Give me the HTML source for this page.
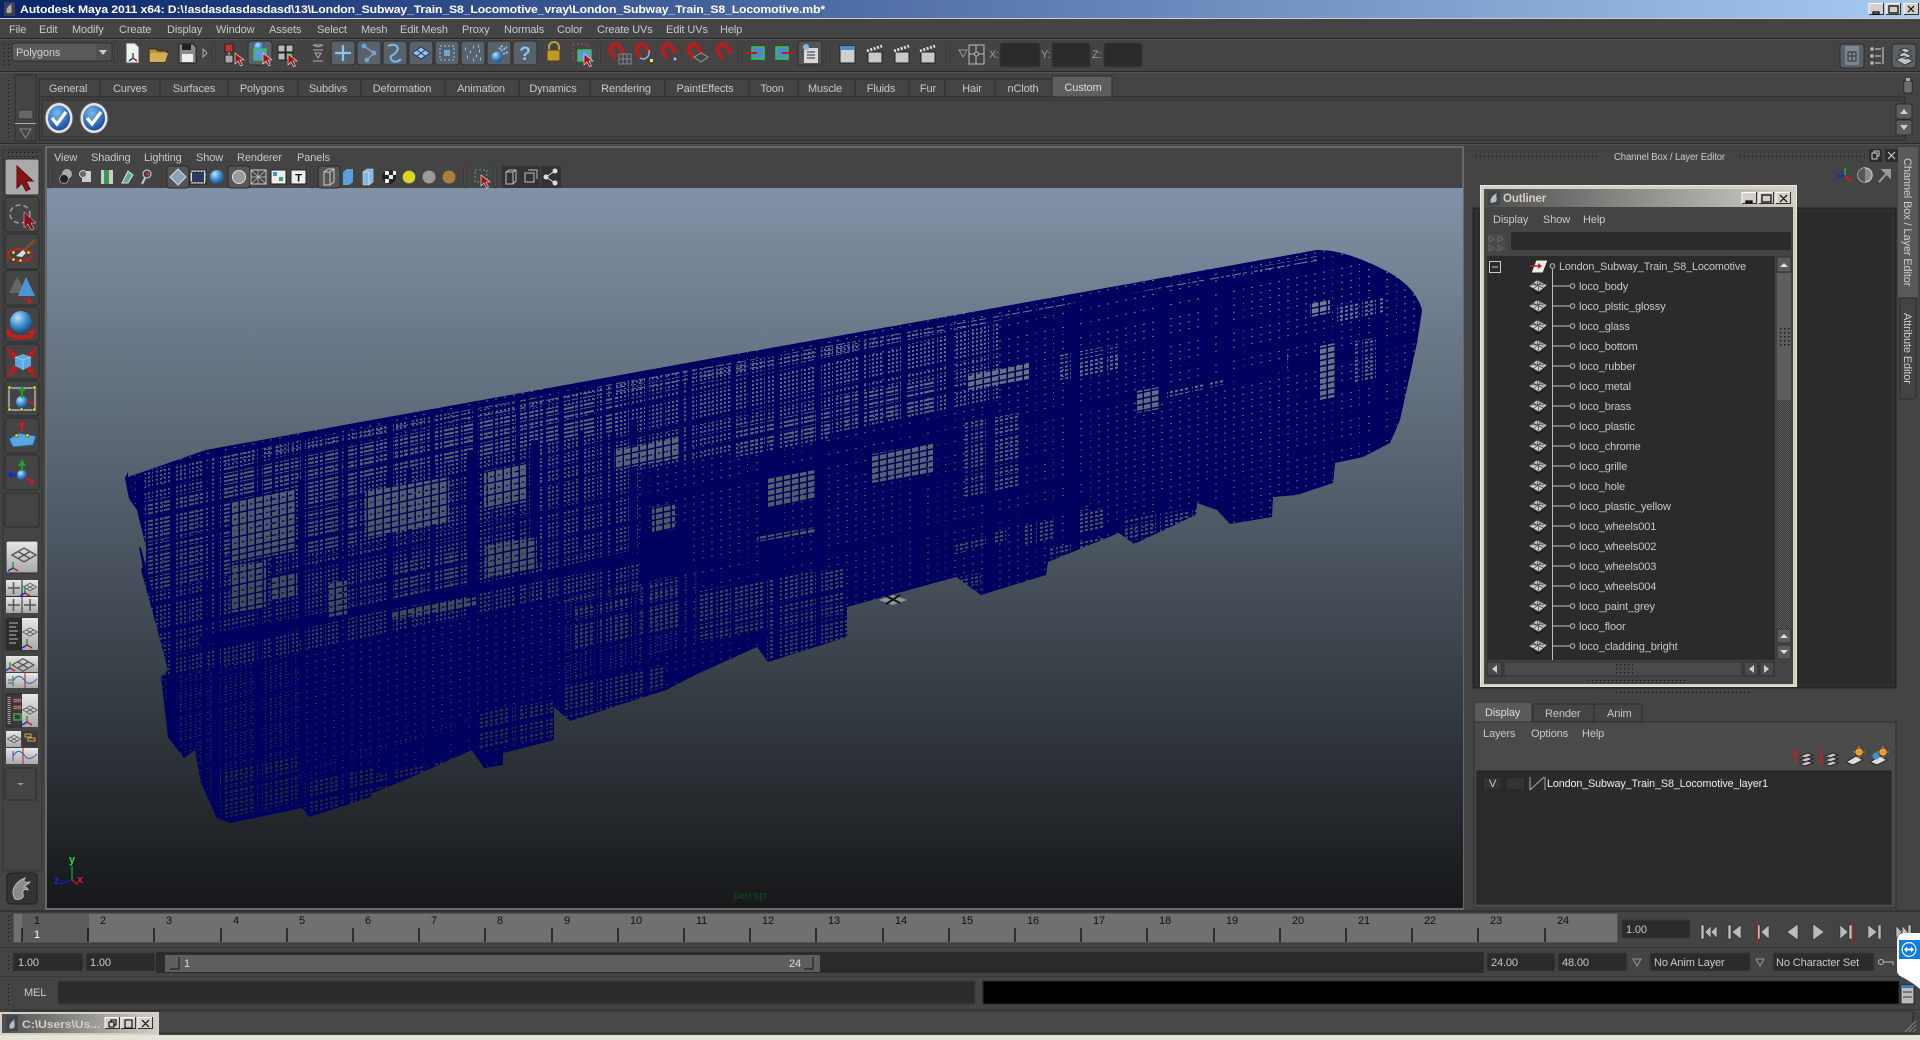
<!DOCTYPE html>
<html><head><meta charset="utf-8"><title>Autodesk Maya 2011</title>
<style>
html,body{margin:0;padding:0;background:#444;overflow:hidden}
svg{display:block}
text{font:11px "Liberation Sans",sans-serif;fill:#c8c8c8;white-space:pre;letter-spacing:-.12px}
.k text,text.k{fill:#111}
</style></head><body>
<svg width="1920" height="1040" viewBox="0 0 1920 1040" xmlns="http://www.w3.org/2000/svg">
<defs>
<linearGradient id="ttl"><stop offset="0" stop-color="#0a246a"/><stop offset="1" stop-color="#a6caf0"/></linearGradient>
<linearGradient id="vp" x1="0" y1="188" x2="0" y2="908" gradientUnits="userSpaceOnUse"><stop offset="0" stop-color="rgb(128,146,166)"/><stop offset="1" stop-color="rgb(22,24,26)"/></linearGradient>
<linearGradient id="ol"><stop offset="0" stop-color="#4d4d4d"/><stop offset="1" stop-color="#d0cec6"/></linearGradient>
<linearGradient id="wb" x1="0" y1="0" x2="0" y2="1"><stop offset="0" stop-color="#e8e8e8"/><stop offset="1" stop-color="#a8a8a8"/></linearGradient>
<radialGradient id="sph" cx=".35" cy=".3" r=".8"><stop offset="0" stop-color="#bfe0f8"/><stop offset=".5" stop-color="#3d8fd0"/><stop offset="1" stop-color="#123f70"/></radialGradient>
<radialGradient id="ck" cx=".4" cy=".3" r=".8"><stop offset="0" stop-color="#79b8f0"/><stop offset="1" stop-color="#0c3f96"/></radialGradient>
<pattern id="dots" width="4" height="4" patternUnits="userSpaceOnUse"><rect width="2" height="2" fill="#2a2a2a"/><rect x="1" y="1" width="1" height="1" fill="#666"/></pattern>
<pattern id="chk" width="2" height="2" patternUnits="userSpaceOnUse"><rect width="2" height="2" fill="#3a3a3a"/><rect width="1" height="1" fill="#5a5a5a"/><rect x="1" y="1" width="1" height="1" fill="#5a5a5a"/></pattern>
<pattern id="pA" width="8" height="6" patternUnits="userSpaceOnUse" patternTransform="skewY(-12)"><rect width="6.5" height="4.5" fill="#000"/></pattern>
<pattern id="pB" width="5" height="4" patternUnits="userSpaceOnUse" patternTransform="skewY(-12)"><rect width="3" height="2" fill="#000"/></pattern>
<pattern id="pC" width="4" height="4" patternUnits="userSpaceOnUse" patternTransform="skewY(-12)"><rect width="2" height="2" fill="#000"/></pattern>
<pattern id="pC2" width="5" height="3" patternUnits="userSpaceOnUse" patternTransform="skewY(-16)"><rect width="1.500" height="1" fill="#000"/></pattern>
<pattern id="pD" width="9" height="7" patternUnits="userSpaceOnUse" patternTransform="skewY(-12)"><rect width="2" height="1" fill="#000"/></pattern>
<pattern id="pH" width="11" height="4" patternUnits="userSpaceOnUse" patternTransform="skewY(-10)"><rect width="9" height="1" fill="#000"/></pattern>
<pattern id="pW" width="17" height="13" patternUnits="userSpaceOnUse" patternTransform="skewY(-12)"><rect width="2" height="13" fill="#fff"/><rect width="17" height="1" fill="#fff"/></pattern>
<pattern id="pW2" width="43" height="29" patternUnits="userSpaceOnUse" patternTransform="skewY(-13)"><rect width="4" height="29" fill="#fff"/><rect width="43" height="3" fill="#fff"/></pattern>
<clipPath id="sil"><path d="M128 477L206 450L720 357L1000 307L1317 250Q1345 249 1390 273Q1416 288 1422 310L1417 343L1400 420L1390 443L1363 457L1335 463L1333 483L1297 495L1273 497L1272 517L1230 524L1217 510L1197 503L1196 515L1134 544L1119 533L1048 562L1046 575L981 595L956 577L847 607L847 637L768 662L757 647L695 675L666 690L570 721L554 707L554 740L503 753L503 765L484 768L472 750L405 780L373 793L371 797L309 817L302 808L230 823L217 818L201 783L195 750L184 758L168 737L161 677L168 670L157 628L141 570L146 560L146 547L137 510L130 500L126 477Z"/></clipPath>
<mask id="train" maskUnits="userSpaceOnUse" x="0" y="0" width="1920" height="1040">
<g clip-path="url(#sil)">
<rect width="1920" height="1040" fill="#fff"/>
<rect x="120" y="240" width="1310" height="590" fill="url(#pD)"/>
<path fill="url(#pC)" d="M145 470L640 378V590L145 680Z"/>
<path fill="url(#pC)" d="M640 378L1000 320V400L640 470Z"/>
<path fill="url(#pC2)" d="M160 680L700 570V640L300 780 200 800Z"/>
<path fill="url(#pH)" d="M206 457L1000 314V324L206 467Z"/>
<path fill="url(#pH)" d="M1000 314L1317 256V262L1000 320Z"/>
<path fill="url(#pB)" d="M213 772l84-15v48l-84 15zM302 780l71-13v33l-71 13zM373 774l94-17v16l-94 17zM476 714l78-14v36l-78 14zM559 686l105-19v34l-105 19zM766 635l44-8v25l-44 8zM699 610l111-20v27l-111 20zM641 587l40-7v50l-40 7zM574 607l58-10v43l-58 10zM391 564l76-14v36l-76 14zM736 424l94-17v33l-94 17zM845 396l88-16v31l-88 16zM1060 355l65-12v25l-65 12zM1167 390l57-10v13l-57 10zM1333 306l50-9v17l-50 9zM1355 341l23-4v46l-23 4zM1287 354l8-1v43l-8 1zM1121 521l76-14v22l-76 14zM1048 548l71-13v14l-71 13zM768 628l79-14v27l-79 14zM956 577l25-5v20l-25-5zM150 500l80-14v90l-80 14zM300 470l60-11v85l-60 11zM215 470L620 395V430L215 505zM964 423l54-10v74l-54 10zM1075 510l30-10v30l-30 10zM700 590l145-23v50l-145 23zM956 544l50-14v10l-50 14zM1025 525l31-5v20l-31 5z"/>
<rect width="1920" height="1040" fill="url(#pW)"/>
<rect width="1920" height="1040" fill="url(#pW2)"/>
<path fill="#fff" d="M199 636L690 543v10L199 646zM640 533l50-9v40l-50 9zM298 480h6v160h-6zM467 450h10v190h-10zM531 440h7v120h-7zM578 430h6v120h-6zM631 420h6v130h-6zM208 455h4v180h-4zM300 650L560 600v90L300 770zM1090 420L1290 370v90L1090 510z"/>
<path fill="url(#pD)" d="M300 650L560 600v90L300 770zM1090 420L1290 370v90L1090 510z"/>
<path fill="url(#pA)" d="M231 502l65-12v61l-65 12zM365 492l84-15v45l-84 15zM484 471l42-8v39l-42 8zM485 546l52-9v31l-52 9zM614 449l65-12v21l-65 12zM652 507l23-4v26l-23 4zM767 479l48-9v28l-48 9zM872 454l61-11v29l-61 11zM968 374l61-11v16l-61 11zM1137 391l22-4v22l-22 4zM1310 304l20-4v13l-20 4zM1320 346l15-3v54l-15 3zM230 566l36-6v47l-36 6zM270 578l27-5v22l-27 5zM329 583l18-3v34l-18 3zM391 612l85-15v8l-85 15zM757 537l58-10v5l-58 10z"/>
</g>
</mask>

<g id="cur"><path d="M0 0v11l3-3 2.5 5 2-1-2.5-5h4z" fill="#a8101c" stroke="#eee" stroke-width=".6"/></g>
<g id="bb"><rect x="-12" y="-12" width="24" height="24" rx="3" fill="#59626a" stroke="#2c2c2c"/></g>
<g id="bg"><rect x="-12" y="-12" width="24" height="24" rx="3" fill="#555" stroke="#2c2c2c"/></g>
<g id="mag"><path d="M-5 7V-1a5 5 0 0 1 10 0V7" fill="none" stroke="#b81c1c" stroke-width="4" transform="rotate(-30)"/></g>
<g id="clap"><rect x="-8" y="-3" width="14" height="11" fill="#c8c8c8" stroke="#222"/><path d="M-9-4L6-9" stroke="#ddd" stroke-width="3" stroke-dasharray="2 1.5"/></g>
<g id="sep"><rect x="-1" y="-11" width="2" height="22" rx="1" fill="#555" stroke="#2a2a2a" stroke-width=".6"/></g>
<g id="pl"><path d="M-12 0L0-7 12 0 0 7Z M-6-3.5L6 3.5M6-3.5L-6 3.5" fill="none" stroke="#555" stroke-width="1.4"/></g>
<g id="xyz"><path d="M0 0V-6" stroke="#12a030" stroke-width="1.4"/><path d="M0 0L-5 3" stroke="#1030d0" stroke-width="1.4"/><path d="M0 0L5 3" stroke="#c81818" stroke-width="1.4"/></g>
<g id="wbk"><rect width="15" height="12" fill="#d4d0c8"/><path d="M0 11.5V.5H14.5" fill="none" stroke="#fff"/><path d="M14.5 0V11.5H0" fill="none" stroke="#333"/></g>
<g id="m"><path d="M-9 2L0 8 9 2 0 9.500Z" fill="#0c0c0c"/><path d="M-9 1L-1-5 9 0 1 7Z" fill="#cfcfcf" stroke="#444" stroke-width=".6"/><path d="M-5-2L5 3M-1-5L1 7M3-2.5L-5 4M-7 0L7-1" stroke="#333" stroke-width=".7"/><path d="M-3 0l2-1 1 2zM3 1l2-1 1 1zM0-3l2 0 0 1z" fill="#777"/></g>
<g id="r"><use href="#m" x="1538" y="-1"/><path d="M1552 0H1570" stroke="#bbb"/><circle cx="1572.5" cy="0" r="2.3" fill="none" stroke="#bbb"/></g>
<g id="tb"><rect x="-17" y="-18" width="34" height="35" rx="3" fill="#444" stroke="#2c2c2c"/></g>
<g id="lb"><rect x="-16" y="-16" width="32" height="32" rx="2" fill="url(#wb)" stroke="#2c2c2c"/></g>
</defs>

<!-- base -->
<rect width="1920" height="1040" fill="#444"/>
<rect width="1920" height="18" fill="url(#ttl)"/>
<rect y="18" width="1920" height="1" fill="#d4d0c8"/>
<rect x="4" y="2" width="11" height="14" fill="#39424a"/><path d="M7 13c-2-4 2-8 5-9-2 3 1 5-1 9z" fill="#aaa"/>
<text x="20" y="13" textLength="805" lengthAdjust="spacingAndGlyphs" style="font-weight:bold;fill:#fff;font-size:11px">Autodesk Maya 2011 x64: D:\!asdasdasdasdasd\13\London_Subway_Train_S8_Locomotive_vray\London_Subway_Train_S8_Locomotive.mb*</text>
<use href="#wbk" x="1869" y="3"/><use href="#wbk" x="1886" y="3"/><use href="#wbk" x="1904" y="3"/>
<path d="M1873 12h6v2h-6zM1889 6h9v7h-9zM1889 6h9M1908 6l6 6M1914 6l-6 6" fill="none" stroke="#000" stroke-width="1.2"/>

<!-- menu -->
<g>
<text x="9" y="33">File</text><text x="39" y="33">Edit</text><text x="72" y="33">Modify</text><text x="119" y="33">Create</text><text x="167" y="33">Display</text><text x="216" y="33">Window</text><text x="269" y="33">Assets</text><text x="317" y="33">Select</text><text x="361" y="33">Mesh</text><text x="400" y="33">Edit Mesh</text><text x="462" y="33">Proxy</text><text x="504" y="33">Normals</text><text x="557" y="33">Color</text><text x="597" y="33">Create UVs</text><text x="666" y="33">Edit UVs</text><text x="720" y="33">Help</text>
</g>
<rect y="38" width="1920" height="1" fill="#262626"/><rect y="39" width="1920" height="1" fill="#555"/>
<rect y="71" width="1920" height="1" fill="#2a2a2a"/><rect y="72" width="1920" height="1" fill="#555"/>

<!-- status line -->
<rect x="4" y="43" width="6" height="22" fill="url(#dots)"/>
<rect x="12" y="43" width="100" height="18" rx="3" fill="#5a5a5a" stroke="#2c2c2c"/><rect x="96" y="44" width="15" height="16" fill="#505050"/>
<text x="16" y="56" style="fill:#d0d0d0">Polygons</text><path d="M99 50h8l-4 5z" fill="#ccc"/>
<use href="#sep" x="116" y="53"/><use href="#sep" x="214" y="53"/><use href="#sep" x="304" y="53"/><use href="#sep" x="599" y="53"/><use href="#sep" x="740" y="53"/><use href="#sep" x="828" y="53"/><use href="#sep" x="948" y="53"/>
<!-- new/open/save -->
<path d="M126 43h9l4 4v16h-13z" fill="#f0f0f0" stroke="#555"/><path d="M133 53v5" stroke="#109030" stroke-width="1.6"/><path d="M133 58l-4 3" stroke="#2030d0" stroke-width="1.6"/><path d="M133 58l4 3" stroke="#c81818" stroke-width="1.6"/>
<path d="M149 49h7l2 2h9l-2 11h-16z" fill="#b8913c" stroke="#3c2c10"/><path d="M150 53h18l-3 9h-15z" fill="#d3ae5a"/>
<path d="M179 44h14l3 3v16h-17z" fill="#8a8a8a" stroke="#222"/><rect x="182" y="44" width="9" height="6" fill="#222"/><rect x="182" y="54" width="11" height="8" fill="#eee"/>
<path d="M203 49l4 4-4 4z" fill="none" stroke="#aaa"/>
<!-- selection masks -->
<rect x="225" y="44" width="8" height="8" fill="#c83030" stroke="#222"/><rect x="225" y="55" width="8" height="8" fill="#aaa" stroke="#222"/><path d="M229 52v3" stroke="#ccc"/><use href="#cur" x="235" y="53"/>
<use href="#bb" x="260" y="53"/><circle cx="259" cy="47" r="5" fill="url(#sph)"/><rect x="254" y="49" width="12" height="11" fill="#5a9bd4" stroke="#38c050" stroke-width="1.5"/><use href="#cur" x="263" y="53"/>
<path d="M278 45h7v7h-7zM286 45h7v7h-7zM278 53h7v7h-7z" fill="#bbb" stroke="#222"/><rect x="286" y="53" width="7" height="7" fill="#4ea850" stroke="#222"/><use href="#cur" x="288" y="54"/>
<path d="M313 45h10l-5 2zM313 50h10M315 53h6l-3 5zM313 61h10" fill="none" stroke="#aaa"/>
<!-- snap boxes & blue icons -->
<use href="#bb" x="343" y="53"/><path d="M343 45v16M335 53h16" stroke="#8cc4ee" stroke-width="2.2"/>
<use href="#bb" x="369" y="53"/><path d="M364 46L374 53 367 60" fill="none" stroke="#9ac" stroke-width="1.2"/><circle cx="364" cy="46" r="2.4" fill="#68a8d8"/><circle cx="374" cy="53" r="2.4" fill="#68a8d8"/><circle cx="367" cy="60" r="2.4" fill="#68a8d8"/>
<use href="#bb" x="395" y="53"/><path d="M388 46c6-3 12 0 9 5s-8 4-6 8 7 3 10 0" fill="none" stroke="#7cbcee" stroke-width="2"/>
<use href="#bb" x="421" y="53"/><path d="M412 53l9-6 9 6-9 6z" fill="#8cc4ee" stroke="#335"/><path d="M417 50l8 6M425 50l-8 6" stroke="#335"/>
<use href="#bb" x="447" y="53"/><rect x="440" y="46" width="14" height="14" fill="none" stroke="#8cc4ee" stroke-dasharray="2 2"/><rect x="444" y="50" width="6" height="6" fill="#68a8d8"/>
<use href="#bb" x="473" y="53"/><path d="M467 57h1M473 47h1M479 51h1M470 52h1M476 56h1M473 60h1M478 46h1M465 49h1M480 59h1" stroke="#8cc4ee" stroke-width="3"/>
<use href="#bb" x="499" y="53"/><circle cx="497" cy="57" r="5.5" fill="url(#sph)"/><path d="M501 51l6-4M503 54l5-2M499 49l4-4" stroke="#8cc4ee" stroke-width="2" stroke-dasharray="2 1"/>
<use href="#bb" x="525" y="53"/><text x="525" y="60" text-anchor="middle" style="font-size:19px;fill:#8cc4ee;font-weight:bold">?</text>
<path d="M549 51v-4a5 5 0 0 1 10 0v4" fill="none" stroke="#bba040" stroke-width="2"/><rect x="547" y="50" width="13" height="11" rx="2" fill="#c09a28" stroke="#5a4410"/>
<rect x="573" y="44" width="15" height="16" fill="none" stroke="#c84040" stroke-dasharray="2 2"/><rect x="578" y="50" width="13" height="11" fill="#5a9bd4" stroke="#38c050" stroke-width="1.5"/><use href="#cur" x="584" y="54"/>
<use href="#mag" x="616" y="50"/><path d="M619 54h12v10h-12zM623 54v10M627 54v10M619 59h12" fill="none" stroke="#999" stroke-width=".8"/>
<use href="#mag" x="642" y="50"/><path d="M640 58c6 3 10-2 9-8" fill="none" stroke="#7cbcee" stroke-width="1.5"/><rect x="650" y="59" width="3" height="3" fill="#ee3"/>
<use href="#mag" x="668" y="50"/><circle cx="675" cy="59" r="1.5" fill="#9bd"/>
<use href="#mag" x="694" y="50"/><path d="M694 57l7-4 7 4-7 5z" fill="none" stroke="#999"/>
<use href="#mag" x="723" y="50"/>
<rect x="752" y="47" width="12" height="12" fill="#4a8cc8" stroke="#38c050" stroke-width="1.6"/><path d="M745 53h12" stroke="#c81818" stroke-width="2"/>
<rect x="776" y="47" width="12" height="12" fill="#4a8cc8" stroke="#38c050" stroke-width="1.6"/><path d="M782 53h12" stroke="#c81818" stroke-width="2"/>
<use href="#bg" x="810" y="53"/><rect x="804" y="48" width="14" height="15" fill="#d8d8d8"/><path d="M807 52h8M807 55h8M807 58h8" stroke="#333"/><circle cx="806" cy="47" r="3" fill="#7cbcee"/>
<rect x="840" y="46" width="15" height="17" fill="#cfcfcf" stroke="#222"/><rect x="840" y="46" width="15" height="4" fill="#4a8cc8"/>
<use href="#clap" x="876" y="55"/><use href="#clap" x="903" y="55"/><use href="#clap" x="929" y="55"/>
<path d="M959 50h8l-4 7z" fill="none" stroke="#999"/>
<rect x="969" y="45" width="15" height="19" fill="none" stroke="#bbb"/><path d="M976 45v19M969 54h15" stroke="#bbb"/><circle cx="976.500" cy="54" r="2" fill="#444" stroke="#bbb"/>
<text x="989" y="58" style="fill:#999">X:</text><rect x="1000" y="43" width="40" height="24" rx="2" fill="#2b2b2b" stroke="#383838"/>
<text x="1041" y="58" style="fill:#999">Y:</text><rect x="1052" y="43" width="38" height="24" rx="2" fill="#2b2b2b" stroke="#383838"/>
<text x="1092" y="58" style="fill:#999">Z:</text><rect x="1104" y="43" width="38" height="24" rx="2" fill="#2b2b2b" stroke="#383838"/>
<use href="#bb" x="1852" y="56"/><rect x="1845" y="46" width="14" height="19" fill="#7a8690"/><path d="M1848 52h8v9h-8zM1852 52v9M1848 56h8" fill="none" stroke="#333"/>
<path d="M1871 48h2v2h-2zM1871 55h2v2h-2zM1871 62h2v2h-2zM1875 49h6M1875 56h6M1875 63h6M1883 47v17" fill="none" stroke="#ddd"/>
<use href="#bb" x="1904" y="56"/><path d="M1896 60l9 5 8-4-9-5zM1898 55l8 4 6-3-8-4zM1900 50l6 3 5-2-6-3z" fill="#bcc4cc" stroke="#333"/>

<!-- shelf -->
<rect x="15" y="75" width="21" height="66" fill="#444" stroke="#2f2f2f"/>
<rect x="6" y="78" width="6" height="62" fill="url(#dots)"/>
<rect x="18" y="110" width="15" height="9" rx="2" fill="#666" stroke="#333"/>
<rect x="15" y="123" width="21" height="1" fill="#aaa"/>
<path d="M20 129h11l-5.500 9z" fill="none" stroke="#888"/>
<g fill="#444" stroke="#2c2c2c">
<rect x="39" y="79" width="61" height="18"/><rect x="100" y="79" width="60" height="18"/><rect x="160" y="79" width="68" height="18"/><rect x="228" y="79" width="70" height="18"/><rect x="298" y="79" width="63" height="18"/><rect x="361" y="79" width="84" height="18"/><rect x="445" y="79" width="74" height="18"/><rect x="519" y="79" width="71" height="18"/><rect x="590" y="79" width="75" height="18"/><rect x="665" y="79" width="84" height="18"/><rect x="749" y="79" width="49" height="18"/><rect x="798" y="79" width="57" height="18"/><rect x="855" y="79" width="54" height="18"/><rect x="909" y="79" width="36" height="18"/><rect x="945" y="79" width="50" height="18"/><rect x="995" y="79" width="57" height="18"/>
</g>
<rect x="1052" y="76" width="60" height="21" rx="2" fill="#5e5e5e" stroke="#2c2c2c"/>
<g text-anchor="middle">
<text x="68" y="92">General</text><text x="130" y="92">Curves</text><text x="194" y="92">Surfaces</text><text x="262" y="92">Polygons</text><text x="328" y="92">Subdivs</text><text x="402" y="92">Deformation</text><text x="481" y="92">Animation</text><text x="553" y="92">Dynamics</text><text x="626" y="92">Rendering</text><text x="705" y="92">PaintEffects</text><text x="772" y="92">Toon</text><text x="825" y="92">Muscle</text><text x="881" y="92">Fluids</text><text x="928" y="92">Fur</text><text x="972" y="92">Hair</text><text x="1023" y="92">nCloth</text><text x="1083" y="91" style="fill:#ddd">Custom</text>
</g>
<rect x="39" y="97" width="1866" height="43" fill="#444" stroke="#2a2a2a"/>
<rect x="42" y="100" width="1860" height="37" fill="#444" stroke="#303030"/>
<ellipse cx="59" cy="118" rx="14" ry="15.500" fill="#e4e4e4" stroke="#555"/><ellipse cx="59" cy="118" rx="11" ry="12.500" fill="url(#ck)"/><path d="M52 118l5 6 9-12" fill="none" stroke="#fff" stroke-width="3.200"/>
<ellipse cx="94" cy="118" rx="14" ry="15.500" fill="#e4e4e4" stroke="#555"/><ellipse cx="94" cy="118" rx="11" ry="12.500" fill="url(#ck)"/><path d="M87 118l5 6 9-12" fill="none" stroke="#fff" stroke-width="3.200"/>
<rect x="1896" y="104" width="16" height="15" rx="2" fill="#5c5c5c" stroke="#2a2a2a"/><rect x="1896" y="120" width="16" height="15" rx="2" fill="#5c5c5c" stroke="#2a2a2a"/><path d="M1900 114l4-5 4 5zM1900 125l4 5 4-5z" fill="#ccc"/>
<rect x="1904" y="81" width="8" height="12" rx="1" fill="#999" stroke="#222"/><path d="M1906 81v12M1908 81v12M1910 81v12" stroke="#444"/><rect x="1906" y="78" width="4" height="3" fill="#aaa"/>
<rect y="143" width="1920" height="1" fill="#2c2c2c"/><rect y="144" width="1920" height="1" fill="#515151"/>

<!-- left toolbar -->
<rect x="3" y="150" width="39" height="721" fill="#444" stroke="#333"/>
<rect x="6" y="151" width="32" height="6" fill="url(#dots)"/>
<use href="#tb" x="22" y="177"/><rect x="5" y="159" width="34" height="36" rx="2" fill="#aaa" stroke="#2c2c2c"/>
<path d="M17 166v22l5-5 4 8 4-2-4-8h7z" fill="#8a1018" stroke="#5a0a10"/>
<use href="#tb" x="22" y="215"/><ellipse cx="20" cy="214" rx="10" ry="9" fill="none" stroke="#999" stroke-width="1.600" stroke-dasharray="5 3"/><path d="M24 212v16l4-4 3 6 3-1-3-6h5z" fill="#8a1018" stroke="#ddd" stroke-width=".5"/>
<use href="#tb" x="22" y="252"/><ellipse cx="20" cy="255" rx="12" ry="6" fill="none" stroke="#c02020" stroke-width="2.200"/><path d="M35 240L22 252" stroke="#7a5028" stroke-width="3"/><path d="M23 250l-7 6 6 1 4-4z" fill="#ddd"/><path d="M12 251h3v3h-3zM27 251h3v3h-3zM19 259h3v3h-3zM12 258h3v3h-3z" fill="#ee3" stroke="#222" stroke-width=".5"/>
<use href="#tb" x="22" y="288"/><path d="M9 293l8-16 6 10 3-5 4 11z" fill="#666"/><path d="M26 277l9 19H18z" fill="#4a96d8"/><path d="M8 294l20 6-2 3 7 0-4-7-1 3z" fill="#c02020"/>
<use href="#tb" x="22" y="325"/><path d="M9 329c-5 8 14 11 24 6" fill="none" stroke="#c02020" stroke-width="4"/><path d="M28 331l8-2-3 9z" fill="#c02020"/><circle cx="21" cy="322" r="11" fill="url(#sph)"/>
<use href="#tb" x="22" y="362"/><path d="M8 349l9 6-4 4zM36 349l-9 6 4 4zM8 376l9-6-4-4zM36 376l-9-6 4-4z" fill="#b81c1c" stroke="#b81c1c" stroke-width="1.500"/><path d="M15 357l8-3 8 3v9l-8 4-8-4z" fill="#5ba8e0"/><path d="M15 357l8 3 8-3M23 360v10" fill="none" stroke="#8ccaf4"/>
<use href="#tb" x="22" y="399"/><path d="M9 388h26v22H9z" fill="none" stroke="#ccc" stroke-width="1.200"/><circle cx="22" cy="402" r="6" fill="url(#sph)"/><path d="M22 398v-10" stroke="#18a030" stroke-width="2"/><path d="M18 391l4-5 4 5z" fill="#18a030"/><path d="M27 401l7 3" stroke="#c02020" stroke-width="2"/><path d="M8 386h3v3H8zM33 386h3v3h-3zM8 408h3v3H8zM33 408h3v3h-3zM20 408h3v3h-3z" fill="#ee3" stroke="#222" stroke-width=".5"/>
<use href="#tb" x="22" y="436"/><path d="M9 439l10-6 17 3-3 9-20 2z" fill="#5ba8e0" stroke="#1f5f90"/><path d="M22 432v-8" stroke="#c02020" stroke-width="2"/><path d="M18 426l4-5 4 5z" fill="#c02020"/><path d="M15 434h3v3h-3zM26 434h3v3h-3z" fill="#ee3" stroke="#222" stroke-width=".5"/>
<use href="#tb" x="22" y="473"/><circle cx="22" cy="475" r="5" fill="url(#sph)"/><path d="M22 471v-7" stroke="#18a030" stroke-width="2"/><path d="M18 466l4-7 4 7z" fill="#18a030"/><path d="M17 475H9" stroke="#1030c0" stroke-width="2"/><path d="M12 471l-6 4 6 3z" fill="#1030c0"/><path d="M26 478l6 3" stroke="#c02020" stroke-width="2"/><path d="M28 483l7 1-3-6z" fill="#c02020"/>
<rect x="5" y="493" width="34" height="34" rx="2" fill="#444" stroke="#2c2c2c"/>
<use href="#lb" x="22" y="557"/><use href="#pl" x="24" y="555"/><use href="#xyz" x="13" y="568"/>
<rect x="6" y="580" width="32" height="33" rx="2" fill="#2a2a2a"/>
<rect x="6" y="580" width="15.500" height="16" fill="url(#wb)"/><rect x="22.500" y="580" width="15.500" height="16" fill="url(#wb)"/><rect x="6" y="597" width="15.500" height="16" fill="url(#wb)"/><rect x="22.500" y="597" width="15.500" height="16" fill="url(#wb)"/>
<path d="M13.500 582v12M8 588h12M13.500 599v12M8 605h12M30 599v12M24 605h12" stroke="#555" stroke-width="1.500"/><use href="#pl" transform="translate(30 587) scale(.55)"/><use href="#xyz" x="25" y="593"/>
<rect x="6" y="618" width="32" height="32" rx="2" fill="#2b2b2b" stroke="#2c2c2c"/><path d="M9 623h9M9 627h7M9 631h9M9 635h7M9 639h9M9 643h7" stroke="#bbb"/><rect x="22" y="618" width="16" height="32" fill="url(#wb)"/><use href="#pl" transform="translate(30 632) scale(.6)"/><use href="#xyz" x="27" y="645"/>
<rect x="6" y="656" width="32" height="16" fill="url(#wb)"/><use href="#pl" transform="translate(23 665) scale(.9)"/><use href="#xyz" x="10" y="668"/>
<rect x="6" y="673" width="32" height="15" fill="url(#wb)"/><path d="M13 676v10M12 680h-4M12 683h-4" stroke="#555"/><path d="M13 681c5-8 9-4 12 0s7 3 12-2" fill="none" stroke="#3874c0" stroke-width="1.200"/><path d="M25 673v15" stroke="#c02020"/>
<rect x="6" y="694" width="16" height="33" fill="#3a3a3a" stroke="#2a2a2a"/><path d="M9 697v27" stroke="#aaa" stroke-width="3" stroke-dasharray="1 1"/><path d="M14 699h3v3h-3zM18 699h3v3h-3zM14 706h3v3h-3zM18 706h3v3h-3z" fill="#c84040" stroke="#999" stroke-width=".5"/><rect x="14" y="714" width="7" height="6" fill="none" stroke="#38c050" stroke-width="1.200"/>
<rect x="22" y="694" width="16" height="33" fill="url(#wb)"/><use href="#pl" transform="translate(30 710) scale(.6)"/><use href="#xyz" x="27" y="722"/>
<rect x="6" y="731" width="15" height="16" fill="url(#wb)"/><use href="#pl" transform="translate(14 739) scale(.55)"/><rect x="22" y="731" width="16" height="16" fill="#3a3a3a"/><path d="M25 734h6v3h-6zM28 738h7v3h-7z" fill="none" stroke="#ccb040"/>
<rect x="6" y="748" width="32" height="16" fill="url(#wb)"/><path d="M13 751v10" stroke="#555"/><path d="M13 756c5-8 9-4 12 0s7 3 12-2" fill="none" stroke="#3874c0" stroke-width="1.200"/><path d="M23 748v16" stroke="#c02020"/>
<rect x="5" y="768" width="31" height="32" rx="1" fill="#444" stroke="#2c2c2c"/><path d="M17 783h7l-3.500 2.500z" fill="#999"/>
<rect x="7" y="873" width="30" height="31" rx="4" fill="#333" stroke="#1e1e1e"/><path d="M15 899c-5-8 0-17 10-21-3 4 1 5 5 4-2 3-5 3-6 5 2 0 4 1 4 3-2-1-4-1-5 1s1 4 0 6c-2 2-5 3-8 2z" fill="#8a8a8a" stroke="#bbb" stroke-width="1"/>

<!-- viewport -->
<rect x="46" y="147" width="1417" height="762" fill="#444" stroke="#8c8c8c"/>
<rect x="47" y="188" width="1416" height="720" fill="url(#vp)"/>
<text x="54" y="161">View</text><text x="91" y="161">Shading</text><text x="144" y="161">Lighting</text><text x="196" y="161">Show</text><text x="237" y="161">Renderer</text><text x="297" y="161">Panels</text>
<use href="#sep" x="50" y="177"/><use href="#sep" x="160" y="177"/><use href="#sep" x="312" y="177"/><use href="#sep" x="465" y="177"/><use href="#sep" x="495" y="177"/>
<circle cx="67" cy="174" r="5" fill="#aaa"/><circle cx="64" cy="179" r="4.500" fill="#222" stroke="#999"/><rect x="82" y="171" width="9" height="11" fill="#ccc"/><circle cx="83" cy="174" r="3.500" fill="#666" stroke="#ccc"/>
<rect x="101" y="170" width="12" height="14" fill="#ccc"/><rect x="104" y="170" width="5" height="14" fill="#3a9a4a"/><path d="M122 183l6-12 5 4-5 8z" fill="#6a9" stroke="#ddd"/>
<circle cx="147" cy="174" r="4" fill="none" stroke="#ddd"/><path d="M145 178l-3 6" stroke="#ccc" stroke-width="2"/><circle cx="148" cy="174" r="1.500" fill="#c33"/>
<rect x="167" y="166" width="22" height="22" rx="3" fill="#555" stroke="#2a2a2a"/><path d="M170 177l8-8 8 8-8 8z" fill="#8aa0b8" stroke="#ddd"/>
<rect x="190" y="170" width="16" height="14" fill="#ddd" stroke="#222"/><path d="M192 172h12v10h-12z" fill="#2a3a5a"/><path d="M190 172h16M190 182h16" stroke="#222" stroke-dasharray="2 1"/>
<circle cx="217" cy="177" r="7" fill="url(#sph)"/>
<rect x="228" y="166" width="22" height="22" rx="3" fill="#555" stroke="#2a2a2a"/><circle cx="239" cy="177" r="6.500" fill="#999" stroke="#ddd"/>
<rect x="251" y="170" width="15" height="14" fill="#444" stroke="#ccc"/><path d="M251 170l15 14M266 170l-15 14M258 170v14M251 177h15" stroke="#ccc" stroke-width=".7"/>
<rect x="271" y="170" width="15" height="14" fill="#eee" stroke="#222"/><rect x="273" y="172" width="4" height="4" fill="#3898c8"/><rect x="279" y="177" width="4" height="4" fill="#38a858"/>
<rect x="291" y="170" width="15" height="14" fill="#eee" stroke="#222"/><text x="298.500" y="181.500" text-anchor="middle" style="font-weight:bold;fill:#111;font-size:11px">T</text>
<rect x="318" y="166" width="22" height="22" rx="3" fill="#555" stroke="#2a2a2a"/><path d="M324 172l4-3h6v13l-4 3h-6z" fill="none" stroke="#ccc"/><path d="M324 172h6v13M330 172l4-3" fill="none" stroke="#ccc"/>
<path d="M343 172l4-3h6v13l-4 3h-6z" fill="#5aa0dc"/><path d="M363 172l4-3h6v13l-4 3h-6z" fill="#7ab8e8" stroke="#ddd" stroke-width=".6"/><path d="M363 172h6v13" fill="none" stroke="#ddd"/>
<circle cx="389" cy="177" r="7" fill="#222"/><path d="M385 171h4v4h-4zM389 175h4v4h-4zM385 179h4v4h-4zM393 171h3v4h-3z" fill="#eee"/>
<circle cx="409" cy="177" r="6.500" fill="#d8d820" stroke="#666" stroke-width=".5"/><circle cx="429" cy="177" r="6.500" fill="#9a9a9a"/><circle cx="449" cy="177" r="6.500" fill="#a5813a"/>
<rect x="475" y="170" width="12" height="12" fill="none" stroke="#38c050" stroke-dasharray="2 2"/><use href="#cur" x="481" y="175"/>
<rect x="502" y="166" width="19" height="22" rx="2" fill="#333"/><path d="M506 172l3-2h7v11l-3 3h-7zM506 172h7v12M513 172l3-2" fill="none" stroke="#bbb"/>
<rect x="521" y="166" width="19" height="22" rx="2" fill="#333"/><path d="M525 173h9v9h-9zM528 170h9v9" fill="none" stroke="#bbb"/>
<rect x="541" y="166" width="20" height="22" rx="2" fill="#333"/><circle cx="546" cy="177" r="2.500" fill="#ddd"/><circle cx="555" cy="171" r="2.500" fill="#ddd"/><circle cx="555" cy="183" r="2.500" fill="#ddd"/><path d="M546 177l9-6M546 177l9 6" stroke="#ddd"/>

<!-- train -->
<rect x="100" y="240" width="1340" height="600" fill="#00005e" mask="url(#train)"/>
<path d="M125 478l3-6 0 10 4 14-3 3zM141 548l-2-1 7 38 5 12 2-3z" fill="#00005e"/>
<path d="M879 600l14-5 14 5-14 5z" fill="#8f959c"/><path d="M886 596l14 7M900 595l-14 9" stroke="#111" stroke-width="2"/>

<!-- axes / persp -->
<path d="M72 880V866" stroke="#10b040" stroke-width="1.200"/><path d="M72 880L60 884" stroke="#1818e0" stroke-width="1.200"/><path d="M72 880L78 885" stroke="#d01818" stroke-width="1.200"/>
<text x="69" y="863" style="fill:#20e040;font-weight:bold">y</text><text x="77" y="883" style="fill:#e02020;font-weight:bold">x</text><text x="54" y="884" style="fill:#2020f0;font-weight:bold">z</text>
<text x="733" y="899" textLength="34" lengthAdjust="spacingAndGlyphs" style="fill:#0e4722">persp</text>

<!-- channel box header -->
<rect x="1475" y="153" width="125" height="5" fill="url(#dots)"/><rect x="1740" y="153" width="125" height="5" fill="url(#dots)"/>
<text x="1614" y="160" textLength="111" lengthAdjust="spacingAndGlyphs" style="fill:#ccc;font-size:10px">Channel Box / Layer Editor</text>
<rect x="1869" y="149" width="13" height="13" rx="2" fill="#2b2b2b"/><rect x="1885" y="149" width="13" height="13" rx="2" fill="#2b2b2b"/><path d="M1872 153h5v6h-5zM1874 153v-2h5v5h-2" fill="none" stroke="#ccc"/><path d="M1888 152l7 7M1895 152l-7 7" stroke="#ccc" stroke-width="1.200"/>
<path d="M1845 176v-8" stroke="#18a030" stroke-width="2"/><path d="M1845 176l-8 0" stroke="#1030c0" stroke-width="2.500"/><path d="M1845 176l6 5" stroke="#c02020" stroke-width="2.500"/>
<circle cx="1865" cy="175" r="7" fill="#888" stroke="#bbb" stroke-width="1.500"/><path d="M1865 168a7 7 0 0 0 0 14z" fill="#555"/>
<path d="M1879 182l9-10M1883 170h7v7z" stroke="#999" stroke-width="2" fill="#999"/>
<rect x="1898" y="147" width="20" height="151" rx="2" fill="#5a5a5a"/>
<path d="M1900 298h16v98l-2 3h-14z" fill="#444" stroke="#2d2d2d"/>
<text transform="rotate(90 1904 158)" x="1904" y="158" style="fill:#d0d0d0">Channel Box / Layer Editor</text>
<text transform="rotate(90 1904 313)" x="1904" y="313" style="fill:#d0d0d0">Attribute Editor</text>
<rect x="1473" y="208" width="423" height="480" fill="#2b2b2b" stroke="#222"/>
<rect x="1476" y="211" width="417" height="474" fill="#2b2b2b" stroke="#3a3a3a"/>

<!-- outliner -->
<rect x="1480.500" y="185.500" width="316" height="501" fill="#d4d0c8" stroke="#e8e6dc"/>
<rect x="1484" y="189" width="309" height="495" fill="#444"/>
<rect x="1484" y="189" width="309" height="18" fill="url(#ol)"/>
<rect x="1488" y="191" width="12" height="14" fill="#3c464e"/><path d="M1491 203c-2-4 2-8 6-10-2 3 1 5-1 9z" fill="#bbb"/>
<text x="1503" y="202" style="font-weight:bold;fill:#d4d0c8;font-size:11.500px">Outliner</text>
<use href="#wbk" x="1742" y="192"/><use href="#wbk" x="1759" y="192"/><use href="#wbk" x="1776" y="192"/>
<path d="M1746 201h6v1.500h-6zM1762 195h9v7h-9zM1780 195l7 7M1787 195l-7 7" fill="none" stroke="#000" stroke-width="1.200"/>
<text x="1493" y="223">Display</text><text x="1543" y="223">Show</text><text x="1583" y="223">Help</text>
<rect x="1488" y="234" width="17" height="17" fill="#4a4a4a"/><path d="M1489 236l5 3-5 3zM1498 236l5 3-5 3zM1489 245l5 3-5 3zM1498 245l5 3-5 3z" fill="none" stroke="#666"/>
<rect x="1511" y="232" width="280" height="18" rx="2" fill="#2b2b2b"/>
<rect x="1487" y="256" width="288" height="404" fill="#2b2b2b"/>
<rect x="1489.500" y="261.500" width="11" height="11" fill="none" stroke="#ccc"/><path d="M1492 267h6" stroke="#ccc"/>
<path d="M1531 273l5-13h12l-5 13z" fill="#ececec" stroke="#222"/><path d="M1530 266h11" stroke="#c02020" stroke-width="1.600"/><path d="M1538 263l4 3-4 3z" fill="#c02020"/>
<circle cx="1552.500" cy="266" r="2.300" fill="none" stroke="#bbb"/>
<path d="M1552.500 269V660" stroke="#bbb"/>
<text x="1559" y="270" textLength="187" lengthAdjust="spacingAndGlyphs">London_Subway_Train_S8_Locomotive</text>
<use href="#r" y="286"/><use href="#r" y="306"/><use href="#r" y="326"/><use href="#r" y="346"/><use href="#r" y="366"/><use href="#r" y="386"/><use href="#r" y="406"/><use href="#r" y="426"/><use href="#r" y="446"/><use href="#r" y="466"/><use href="#r" y="486"/><use href="#r" y="506"/><use href="#r" y="526"/><use href="#r" y="546"/><use href="#r" y="566"/><use href="#r" y="586"/><use href="#r" y="606"/><use href="#r" y="626"/><use href="#r" y="646"/>
<text x="1579" y="290">loco_body</text><text x="1579" y="310">loco_plstic_glossy</text><text x="1579" y="330">loco_glass</text><text x="1579" y="350">loco_bottom</text><text x="1579" y="370">loco_rubber</text><text x="1579" y="390">loco_metal</text><text x="1579" y="410">loco_brass</text><text x="1579" y="430">loco_plastic</text><text x="1579" y="450">loco_chrome</text><text x="1579" y="470">loco_grille</text><text x="1579" y="490">loco_hole</text><text x="1579" y="510">loco_plastic_yellow</text><text x="1579" y="530">loco_wheels001</text><text x="1579" y="550">loco_wheels002</text><text x="1579" y="570">loco_wheels003</text><text x="1579" y="590">loco_wheels004</text><text x="1579" y="610">loco_paint_grey</text><text x="1579" y="630">loco_floor</text><text x="1579" y="650">loco_cladding_bright</text>
<rect x="1775" y="256" width="18" height="404" fill="#444"/>
<rect x="1777" y="400" width="14" height="229" fill="url(#chk)"/>
<rect x="1777" y="273" width="14" height="127" fill="#5e5e5e"/>
<rect x="1779" y="327" width="11" height="20" fill="url(#dots)"/>
<rect x="1777" y="257" width="14" height="15" rx="2" fill="#5a5a5a" stroke="#333"/><path d="M1780 267l4-4 4 4z" fill="#ddd"/>
<rect x="1777" y="629" width="14" height="14" rx="2" fill="#5a5a5a" stroke="#333"/><path d="M1780 638l4-4 4 4z" fill="#ddd"/>
<rect x="1777" y="645" width="14" height="14" rx="2" fill="#5a5a5a" stroke="#333"/><path d="M1780 650l4 4 4-4z" fill="#ddd"/>
<rect x="1487" y="662" width="15" height="14" rx="1" fill="#4a4a4a" stroke="#2a2a2a"/><path d="M1497 665l-5 4 5 4z" fill="#ccc"/>
<rect x="1504" y="662" width="238" height="14" fill="#4a4a4a" stroke="#333"/><rect x="1614" y="664" width="19" height="10" fill="url(#dots)"/>
<rect x="1744" y="662" width="14" height="14" rx="1" fill="#4a4a4a" stroke="#2a2a2a"/><path d="M1754 665l-5 4 5 4z" fill="#ccc"/>
<rect x="1760" y="662" width="14" height="14" rx="1" fill="#4a4a4a" stroke="#2a2a2a"/><path d="M1764 665l5 4-5 4z" fill="#ccc"/>
<rect x="1588" y="678" width="99" height="4" fill="url(#dots)"/>
<rect x="1614" y="692" width="138" height="4" fill="url(#dots)"/>

<!-- layer editor -->
<rect x="1474" y="722" width="422" height="186" fill="#4a4a4a" stroke="#2f2f2f"/>
<rect x="1474" y="702" width="58" height="20" rx="2" fill="#5a5a5a" stroke="#333"/>
<rect x="1533" y="704" width="61" height="18" rx="2" fill="#444" stroke="#2c2c2c"/><rect x="1594" y="704" width="48" height="18" rx="2" fill="#444" stroke="#2c2c2c"/>
<text x="1485" y="716" style="fill:#ddd">Display</text><text x="1545" y="717">Render</text><text x="1607" y="717">Anim</text>
<text x="1483" y="737">Layers</text><text x="1531" y="737">Options</text><text x="1582" y="737">Help</text>
<path d="M1796 764V750" stroke="#c02020" stroke-width="1.600"/><path d="M1793 754l3-5 3 5z" fill="#c02020"/><path d="M1800 756l8-3 5 2-8 3zM1800 760l8-3 5 2-8 3zM1800 764l8-3 5 2-8 3z" fill="#c4c4c4" stroke="#222"/>
<path d="M1821 750v14" stroke="#c02020" stroke-width="1.600"/><path d="M1818 760l3 5 3-5z" fill="#c02020"/><path d="M1825 756l8-3 5 2-8 3zM1825 760l8-3 5 2-8 3zM1825 764l8-3 5 2-8 3z" fill="#c4c4c4" stroke="#222"/>
<path d="M1846 762l10-6 7 4-10 5z" fill="#ddd" stroke="#222"/><circle cx="1859" cy="752" r="3.500" fill="#f5b030"/><path d="M1859 746v12M1853 752h12" stroke="#f08020"/>
<path d="M1870 762l10-6 7 4-10 5z" fill="#ddd" stroke="#222"/><circle cx="1876" cy="756" r="3.500" fill="#3f8fd0"/><circle cx="1883" cy="752" r="3.500" fill="#f5b030"/><path d="M1883 746v12M1877 752h12" stroke="#f08020"/>
<rect x="1477" y="771" width="414" height="133" fill="#2b2b2b" stroke="#222"/>
<rect x="1483" y="777" width="19" height="13" rx="2" fill="#333" stroke="#222"/><rect x="1506" y="777" width="19" height="13" rx="2" fill="#333" stroke="#222"/>
<text x="1489" y="787" style="fill:#ccc">V</text>
<path d="M1530 790l14-13M1530 777v13M1545 777v13" stroke="#aaa" fill="none"/>
<text x="1547" y="787" textLength="221" lengthAdjust="spacingAndGlyphs" style="fill:#eee">London_Subway_Train_S8_Locomotive_layer1</text>

<!-- timeline -->
<rect y="910" width="1920" height="2" fill="#333"/>
<rect x="6" y="915" width="5" height="26" fill="url(#dots)"/>
<rect x="13" y="913" width="1605" height="30" fill="#707070" stroke="#3a3a3a"/>
<rect x="22" y="914" width="67" height="28" fill="#5c5c5c"/>
<path d="M22 928v14M88 928v14M154 928v14M221 928v14M287 928v14M353 928v14M419 928v14M485 928v14M552 928v14M618 928v14M684 928v14M750 928v14M816 928v14M883 928v14M949 928v14M1015 928v14M1081 928v14M1147 928v14M1214 928v14M1280 928v14M1346 928v14M1412 928v14M1478 928v14M1545 928v14" stroke="#0a0a0a" stroke-width="1.300"/>
<g class="k">
<text x="34" y="924">1</text><text x="100" y="924">2</text><text x="166" y="924">3</text><text x="233" y="924">4</text><text x="299" y="924">5</text><text x="365" y="924">6</text><text x="431" y="924">7</text><text x="497" y="924">8</text><text x="564" y="924">9</text><text x="630" y="924">10</text><text x="696" y="924">11</text><text x="762" y="924">12</text><text x="828" y="924">13</text><text x="895" y="924">14</text><text x="961" y="924">15</text><text x="1027" y="924">16</text><text x="1093" y="924">17</text><text x="1159" y="924">18</text><text x="1226" y="924">19</text><text x="1292" y="924">20</text><text x="1358" y="924">21</text><text x="1424" y="924">22</text><text x="1490" y="924">23</text><text x="1557" y="924">24</text>
</g>
<text x="34" y="938" style="fill:#fff">1</text>
<rect x="1622" y="920" width="68" height="18" rx="2" fill="#2b2b2b" stroke="#383838"/><text x="1626" y="933">1.00</text>
<g fill="#bbb" stroke="#222" stroke-width=".5">
<path d="M1701 925h3v14h-3zM1705 932l6-6v12zM1711 932l6-6v12z"/>
<path d="M1728 925h3v14h-3zM1732 932l9-7v14z"/>
<path d="M1757 925h3v14h-3zM1761 932l8-7v14z"/>
<path d="M1787 932l11-8v16z"/>
<path d="M1813 924l11 8-11 8z"/>
<path d="M1840 925l8 7-8 7zM1849 925h3v14h-3z"/>
<path d="M1868 925l9 7-9 7zM1878 925h3v14h-3z"/>
<path d="M1896 926l6 6-6 6zM1902 926l6 6-6 6zM1908 925h3v14h-3z"/>
</g>
<path d="M1757.500 921v22M1852.500 921v22" stroke="#c02020"/>

<!-- range slider -->
<rect y="947" width="1920" height="1" fill="#383838"/>
<rect x="6" y="954" width="5" height="18" fill="url(#dots)"/>
<rect x="13" y="953" width="70" height="18" rx="2" fill="#2b2b2b" stroke="#383838"/><text x="18" y="966">1.00</text>
<rect x="86" y="953" width="69" height="18" rx="2" fill="#2b2b2b" stroke="#383838"/><text x="90" y="966">1.00</text>
<rect x="156" y="952" width="1328" height="21" fill="#2b2b2b"/>
<rect x="165" y="955" width="655" height="17" fill="#5e5e5e"/>
<path d="M170 969h9V957M813 957v12h-9" fill="none" stroke="#222" stroke-width="1.200"/>
<text x="184" y="967" style="fill:#ddd">1</text><text x="789" y="967" style="fill:#ddd">24</text>
<rect x="1487" y="953" width="68" height="18" rx="2" fill="#2b2b2b" stroke="#383838"/><text x="1491" y="966">24.00</text>
<rect x="1558" y="953" width="69" height="18" rx="2" fill="#2b2b2b" stroke="#383838"/><text x="1562" y="966">48.00</text>
<path d="M1633 959h8l-4 7z" fill="none" stroke="#999"/>
<rect x="1650" y="953" width="100" height="18" rx="2" fill="#2b2b2b" stroke="#383838"/><text x="1654" y="966">No Anim Layer</text>
<path d="M1756 959h8l-4 7z" fill="none" stroke="#999"/>
<rect x="1773" y="953" width="101" height="18" rx="2" fill="#2b2b2b" stroke="#383838"/><text x="1776" y="966">No Character Set</text>
<circle cx="1881" cy="962" r="2.500" fill="none" stroke="#bbb"/><path d="M1884 962h9v3" fill="none" stroke="#bbb"/>

<!-- MEL -->
<rect y="976" width="1920" height="1" fill="#383838"/>
<rect x="6" y="981" width="5" height="24" fill="url(#dots)"/>
<text x="24" y="996" style="fill:#ccc">MEL</text>
<rect x="58" y="981" width="917" height="23" rx="2" fill="#2b2b2b" stroke="#383838"/>
<rect x="983" y="981" width="916" height="23" fill="#000" stroke="#2a2a2a"/>
<rect x="1901" y="985" width="13" height="19" fill="#bcbcbc" stroke="#222"/><rect x="1901" y="985" width="13" height="3" fill="#3a7ac0"/><path d="M1903 992h9M1903 997h9" stroke="#333"/>

<!-- help line + taskbar -->
<rect y="1009" width="1920" height="1" fill="#383838"/>
<rect x="13" y="1011" width="1900" height="22" fill="#484848" stroke="#2a2a2a"/>
<path d="M1905 1032l11-11M1909 1032l7-7M1913 1032l3-3" stroke="#888"/>
<rect y="1035" width="1920" height="5" fill="#e6e3d7"/>
<rect x="0" y="1012" width="159" height="23" fill="#d4d0c8"/>
<rect x="2" y="1014" width="155" height="19" fill="url(#ol)"/>
<rect x="6" y="1015" width="12" height="16" fill="#3c464e"/><path d="M10 1029c-2-4 2-8 5-10-2 3 1 5-1 9z" fill="#bbb"/>
<text x="22" y="1028" style="font-weight:bold;fill:#cfcfcf;font-size:11px" textLength="78" lengthAdjust="spacingAndGlyphs">C:\Users\Us...</text>
<use href="#wbk" x="105" y="1017"/><use href="#wbk" x="121" y="1017"/><use href="#wbk" x="138" y="1017"/>
<path d="M109 1022h5v5h-5zM111 1022v-2h5v5h-2M125 1020h7v8h-7zM142 1020l7 7M149 1020l-7 7" fill="none" stroke="#000" stroke-width="1.100"/>

<!-- teamviewer -->
<path d="M1920 933H1905Q1897 933 1897 941V970Q1897 975 1902 977Q1912 982 1920 989Z" fill="#fff"/>
<rect x="1899" y="940" width="21" height="19" fill="#0a7ee6"/>
<circle cx="1909" cy="949.500" r="7.500" fill="#fff"/><circle cx="1909" cy="949.500" r="6.300" fill="#0a7ee6"/>
<path d="M1904 949.500l3-3v2h4v-2l3 3-3 3v-2h-4v2z" fill="#fff"/>
</svg>
</body></html>
